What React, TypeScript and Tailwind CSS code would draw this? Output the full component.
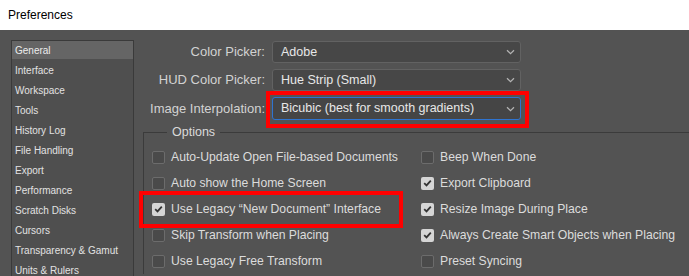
import { ReactNode } from 'react';

const sections = [
  'General',
  'Interface',
  'Workspace',
  'Tools',
  'History Log',
  'File Handling',
  'Export',
  'Performance',
  'Scratch Disks',
  'Cursors',
  'Transparency & Gamut',
  'Units & Rulers',
];

const leftOptions = [
  { label: 'Auto-Update Open File-based Documents', checked: false },
  { label: 'Auto show the Home Screen', checked: false },
  { label: 'Use Legacy \u201CNew Document\u201D Interface', checked: true, marked: true },
  { label: 'Skip Transform when Placing', checked: false },
  { label: 'Use Legacy Free Transform', checked: false },
];

const rightOptions = [
  { label: 'Beep When Done', checked: false },
  { label: 'Export Clipboard', checked: true },
  { label: 'Resize Image During Place', checked: true },
  { label: 'Always Create Smart Objects when Placing', checked: true },
  { label: 'Preset Syncing', checked: false },
];

const Chevron = () => (
  <svg width="9" height="6" viewBox="0 0 9 6" className="shrink-0">
    <path d="M1 1.2l3.5 3.4L8 1.2" fill="none" stroke="#b4b4b4" strokeWidth="1.2" />
  </svg>
);

const Dropdown = ({ value, active, children }: { value: string; active?: boolean; children?: ReactNode }) => (
  <div
    className={
      active
        ? 'relative flex h-[23px] items-center justify-between rounded-[3px] border border-[#2f74d0] bg-[#454545] pl-[8px] pr-[5px]'
        : 'relative flex h-[22px] items-center justify-between rounded-[3px] border border-[#626262] bg-[#474747] pl-[8px] pr-[5px]'
    }
  >
    <span className="text-[12.5px] text-[#e8e8e8]">{value}</span>
    <Chevron />
    {children}
  </div>
);

const Checkbox = ({ checked }: { checked: boolean }) =>
  checked ? (
    <div className="flex h-[13px] w-[13px] shrink-0 items-center justify-center rounded-[2px] bg-[#d5d5d5]">
      <svg width="9" height="8" viewBox="0 0 9 8">
        <path d="M1.2 4.2l2.3 2.2L7.8 1.6" fill="none" stroke="#333333" strokeWidth="1.8" />
      </svg>
    </div>
  ) : (
    <div className="h-[13px] w-[13px] shrink-0 rounded-[2px] border border-[#6c6c6c] bg-[#4a4a4a]" />
  );

const OptionRow = ({ label, checked, marked }: { label: string; checked: boolean; marked?: boolean }) => (
  <div className="relative flex h-[26px] items-center gap-[6px]">
    <Checkbox checked={checked} />
    <span className="whitespace-nowrap text-[12.2px] text-[#dcdcdc]">{label}</span>
    {marked && <div className="absolute -left-[13px] -top-[5px] h-[37px] w-[264px] border-4 border-[#ff0000]" />}
  </div>
);

const App = () => {
  return (
    <div className="h-[276px] w-[689px] overflow-hidden bg-[#535353] font-['Liberation_Sans',Arial,sans-serif]">
      {/* title bar */}
      <div className="flex h-[30px] items-center bg-white pl-[8px]">
        <p className="text-[12px] text-black">Preferences</p>
      </div>

      <div className="flex">
        {/* section list */}
        <aside className="ml-[11px] mt-[10px] h-[300px] w-[123px] shrink-0 border border-[#3a3a3a] bg-[#4f4f4f]">
          <ul className="flex flex-col gap-[2px]">
            {sections.map((s, i) => (
              <li
                key={s}
                className={
                  i === 0
                    ? 'flex h-[18px] items-center bg-[#656565] pl-[3px] text-[10px] text-[#ececec]'
                    : 'flex h-[18px] items-center pl-[3px] text-[10px] text-[#e2e2e2]'
                }
              >
                {s}
              </li>
            ))}
          </ul>
        </aside>

        <main className="flex-1 pt-[11px]">
          {/* pickers */}
          <div className="grid grid-cols-[131px_249px] items-center gap-x-[7px] gap-y-[6px]">
            <p className="text-right text-[13px] text-[#d2d2d2]">Color Picker:</p>
            <Dropdown value="Adobe" />
            <p className="text-right text-[13px] text-[#d2d2d2]">HUD Color Picker:</p>
            <Dropdown value="Hue Strip (Small)" />
            <p className="text-right text-[13px] text-[#d2d2d2]">Image Interpolation:</p>
            <Dropdown value="Bicubic (best for smooth gradients)" active>
              <div className="absolute -left-[7px] -top-[7px] h-[37px] w-[263px] border-4 border-[#ff0000]" />
            </Dropdown>
          </div>

          {/* options */}
          <fieldset className="ml-[9px] mt-[4px] border-l border-t border-[#3b3b3b] pl-[8px] pt-[4px]">
            <legend className="ml-[15px] px-[5px] text-[12.5px] leading-[16px] text-[#dadada]">Options</legend>
            <div className="grid grid-cols-[269px_1fr]">
              <div className="flex flex-col">
                {leftOptions.map((o) => (
                  <OptionRow key={o.label} {...o} />
                ))}
              </div>
              <div className="flex flex-col">
                {rightOptions.map((o) => (
                  <OptionRow key={o.label} {...o} />
                ))}
              </div>
            </div>
          </fieldset>
        </main>
      </div>
    </div>
  );
};

export default App;
